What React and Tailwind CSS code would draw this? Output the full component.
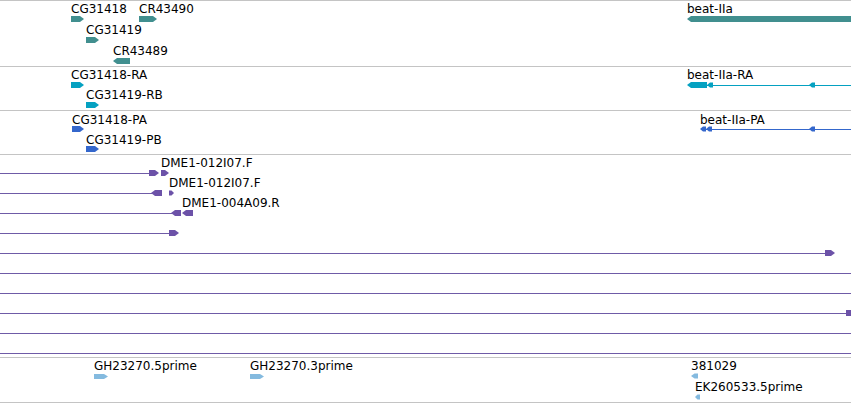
import React from "react";

const arrowPoints = (x, y, w, h, dir) => {
  const t = Math.min(4, w / 2);
  if (dir === "R")
    return `${x},${y} ${x + w - t},${y} ${x + w},${y + h / 2} ${x + w - t},${y + h} ${x},${y + h}`;
  return `${x + w},${y} ${x + t},${y} ${x},${y + h / 2} ${x + t},${y + h} ${x + w},${y + h}`;
};

const Glyph = ({ x, y, w, h = 6, dir = "R", color }) => (
  <polygon points={arrowPoints(x, y, w, h, dir)} fill={color} />
);

const Line = ({ x1 = 0, x2 = 851, y, color }) => (
  <line x1={x1} x2={x2} y1={y} y2={y} stroke={color} strokeWidth="1" />
);

const Label = ({ className, children }) => (
  <span className={`absolute whitespace-nowrap text-[12px] leading-[14px] text-black ${className}`}>
    {children}
  </span>
);

const Track = ({ height, children, labels }) => (
  <div className={`relative border-b border-[#c4c4c4] ${height}`}>
    <svg className="absolute inset-0 w-full h-full" width="851">
      {children}
    </svg>
    {labels}
  </div>
);

const TEAL = "#418f8f";
const CYAN = "#05a1c1";
const BLUE = "#3467cc";
const PURPLE = "#6c52a8";
const LINE = "#6f5ba7";
const LIGHT = "#84badf";

export default function App() {
  return (
    <div
      className="w-[851px] h-[403px] overflow-hidden bg-white border-t border-[#c4c4c4]"
      style={{ fontFamily: '"DejaVu Sans", sans-serif' }}
    >
      {/* Genes */}
      <Track
        height="h-[66px]"
        labels={
          <>
            <Label className="left-[71px] top-[1px]">CG31418</Label>
            <Label className="left-[139px] top-[1px]">CR43490</Label>
            <Label className="left-[86px] top-[22px]">CG31419</Label>
            <Label className="left-[113px] top-[43px]">CR43489</Label>
            <Label className="left-[687px] top-[1px]">beat-IIa</Label>
          </>
        }
      >
        <Glyph x={71} y={15} w={13} color={TEAL} />
        <Glyph x={139} y={15} w={18} color={TEAL} />
        <Glyph x={86} y={36} w={13} color={TEAL} />
        <Glyph x={113} y={57} w={17} dir="L" color={TEAL} />
        <Glyph x={687} y={15} w={170} dir="L" color={TEAL} />
      </Track>

      {/* Transcripts */}
      <Track
        height="h-[44px]"
        labels={
          <>
            <Label className="left-[71px] top-[1px]">CG31418-RA</Label>
            <Label className="left-[86px] top-[21px]">CG31419-RB</Label>
            <Label className="left-[687px] top-[1px]">beat-IIa-RA</Label>
          </>
        }
      >
        <Glyph x={71} y={15} w={13} color={CYAN} />
        <Glyph x={86} y={35} w={13} color={CYAN} />
        <Line x1={707} y={18.5} color={CYAN} />
        <Glyph x={687} y={15} w={20} dir="L" color={CYAN} />
        <Glyph x={707} y={15.5} w={6} h={5} dir="L" color={CYAN} />
        <Glyph x={809} y={15.5} w={6} h={5} dir="L" color={CYAN} />
      </Track>

      {/* Proteins */}
      <Track
        height="h-[44px]"
        labels={
          <>
            <Label className="left-[72px] top-[2px]">CG31418-PA</Label>
            <Label className="left-[86px] top-[22px]">CG31419-PB</Label>
            <Label className="left-[700px] top-[2px]">beat-IIa-PA</Label>
          </>
        }
      >
        <Glyph x={72} y={15} w={12} color={BLUE} />
        <Glyph x={86} y={35} w={13} color={BLUE} />
        <Line x1={706} y={18.5} color={BLUE} />
        <Glyph x={700} y={15.5} w={6} h={5} dir="L" color={BLUE} />
        <Glyph x={706} y={15.5} w={6} h={5} dir="L" color={BLUE} />
        <Glyph x={809} y={15.5} w={6} h={5} dir="L" color={BLUE} />
      </Track>

      {/* ESTs */}
      <Track
        height="h-[203px]"
        labels={
          <>
            <Label className="left-[161px] top-[1px]">DME1-012I07.F</Label>
            <Label className="left-[169px] top-[21px]">DME1-012I07.F</Label>
            <Label className="left-[182px] top-[41px]">DME1-004A09.R</Label>
          </>
        }
      >
        <Line x2={150} y={18.5} color={LINE} />
        <Glyph x={149} y={15} w={10} color={PURPLE} />
        <Glyph x={161} y={15} w={8} color={PURPLE} />

        <Line x2={152} y={38.5} color={LINE} />
        <Glyph x={151} y={35} w={11} dir="L" color={PURPLE} />
        <Glyph x={169} y={35.5} w={5} h={5} color={PURPLE} />

        <Line x2={172} y={58.5} color={LINE} />
        <Glyph x={171} y={55} w={10} dir="L" color={PURPLE} />
        <Glyph x={182} y={55} w={11} dir="L" color={PURPLE} />

        <Line x2={170} y={78.5} color={LINE} />
        <Glyph x={169} y={75} w={10} color={PURPLE} />

        <Line x2={826} y={98.5} color={LINE} />
        <Glyph x={825} y={95} w={10} color={PURPLE} />

        <Line y={118.5} color={LINE} />
        <Line y={138.5} color={LINE} />

        <Line x2={846} y={158.5} color={LINE} />
        <Glyph x={846} y={155} w={10} color={PURPLE} />

        <Line y={178.5} color={LINE} />
        <Line y={198.5} color={LINE} />
      </Track>

      {/* Reads */}
      <Track
        height="h-[45px]"
        labels={
          <>
            <Label className="left-[94px] top-[1px]">GH23270.5prime</Label>
            <Label className="left-[250px] top-[1px]">GH23270.3prime</Label>
            <Label className="left-[691px] top-[1px]">381029</Label>
            <Label className="left-[695px] top-[22px]">EK260533.5prime</Label>
          </>
        }
      >
        <Glyph x={94} y={16} w={14} h={5} color={LIGHT} />
        <Glyph x={250} y={16} w={14} h={5} color={LIGHT} />
        <Glyph x={691} y={15.5} w={7} h={5} dir="L" color={LIGHT} />
        <Glyph x={695} y={36.5} w={5} h={5} dir="L" color={LIGHT} />
      </Track>
    </div>
  );
}
